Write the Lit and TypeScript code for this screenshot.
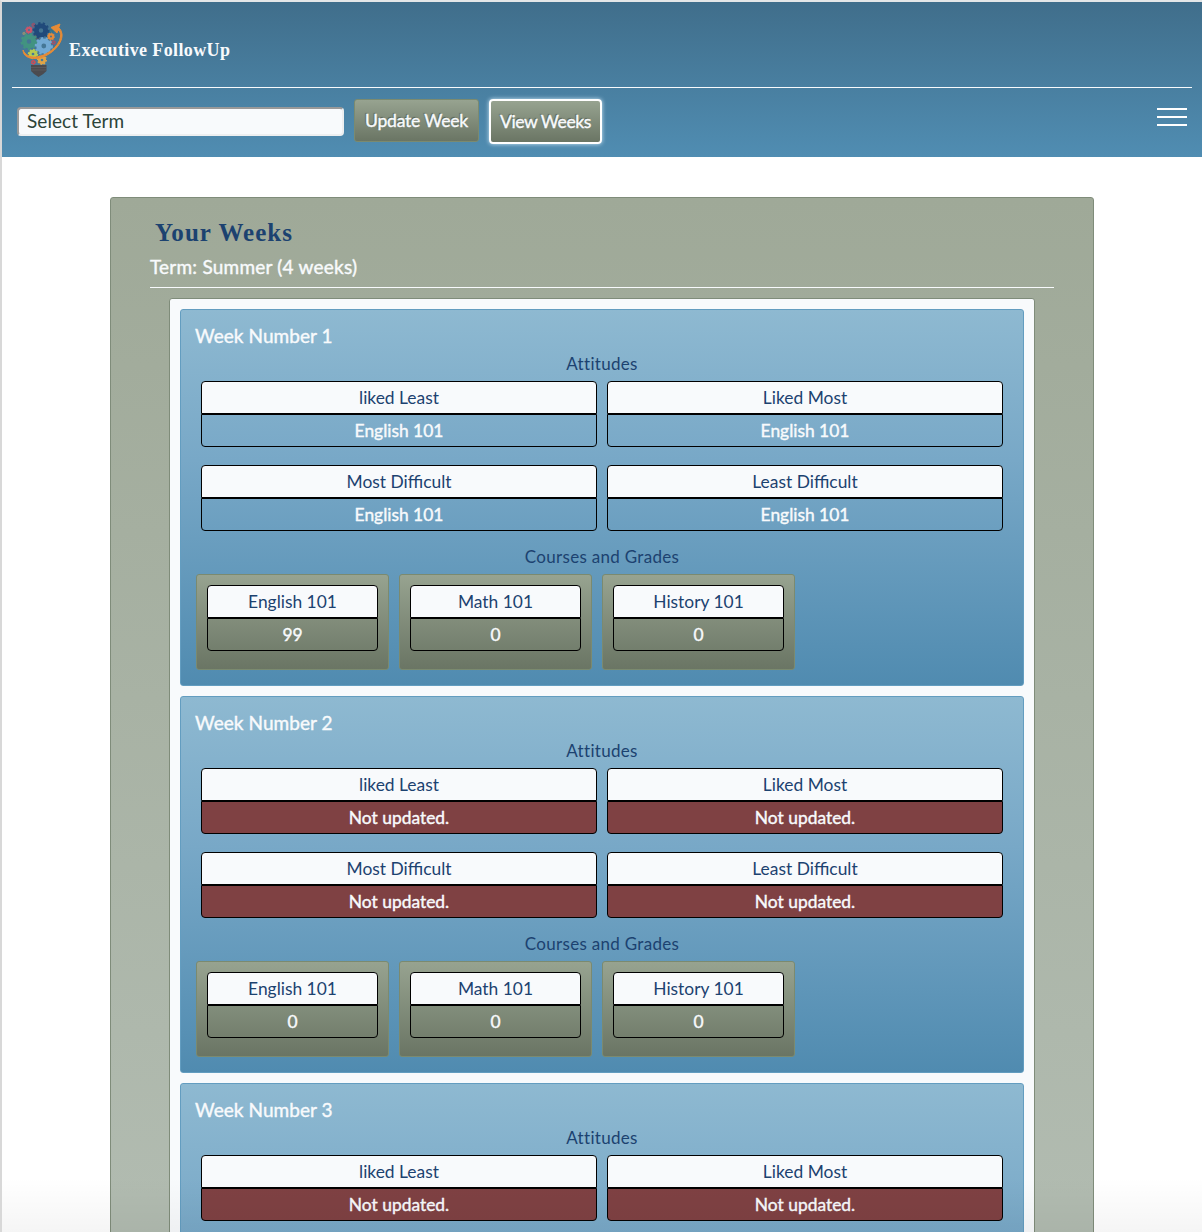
import { LitElement, html, css, svg } from "lit";
import { customElement, property } from "lit/decorators.js";

interface Entry { label: string; value: string; missing?: boolean; }
interface Week { num: number; attitudes: Entry[]; courses: Entry[]; }

const NAMES = ["liked Least", "Liked Most", "Most Difficult", "Least Difficult"];
const COURSES = ["English 101", "Math 101", "History 101"];

const makeWeek = (num: number): Week => ({
  num,
  attitudes: NAMES.map((label) =>
    num === 1 ? { label, value: "English 101" } : { label, value: "Not updated.", missing: true }),
  courses: COURSES.map((label, i) => ({ label, value: num === 1 && i === 0 ? "99" : "0" })),
});

const WEEKS: Week[] = [
  makeWeek(1),
  makeWeek(2),
  { num: 3, attitudes: makeWeek(3).attitudes.slice(0, 2), courses: [] },
];

/** A toothed ring centred on (x, y). */
const gear = (x: number, y: number, r: number, color: string, teeth = 8) => {
  const ring = r * 0.58;
  const dash = (Math.PI * 2 * (r * 0.9)) / (teeth * 2);
  return svg`
    <circle cx=${x} cy=${y} r=${ring} fill="none" stroke=${color} stroke-width=${r * 0.6}></circle>
    <circle cx=${x} cy=${y} r=${r * 0.92} fill="none" stroke=${color} stroke-width=${r * 0.28}
      stroke-dasharray="${dash} ${dash}"></circle>`;
};

@customElement("entry-box")
class EntryBox extends LitElement {
  @property({ attribute: false }) entry!: Entry;

  static styles = css`
    :host { display: block; }
    .cell {
      box-sizing: border-box;
      height: 33px;
      line-height: 31px;
      border: 1px solid #000;
      text-align: center;
      font-size: 17.4px;
      white-space: nowrap;
    }
    .label { background: #f8fafc; color: #1c4270; border-radius: 4px 4px 0 0; }
    .value { color: #f8fafc; border-radius: 0 0 4px 4px; -webkit-text-stroke: 0.4px #f8fafc; }
    .missing { background: #7f4143; }
  `;

  render() {
    return html`
      <div class="cell label">${this.entry.label}</div>
      <div class="cell value ${this.entry.missing ? "missing" : ""}">${this.entry.value}</div>`;
  }
}

@customElement("week-card")
class WeekCard extends LitElement {
  @property({ attribute: false }) week!: Week;

  static styles = css`
    :host {
      display: block;
      box-sizing: border-box;
      height: 377px;
      padding: 13px 15px 14px;
      border: 1px solid #639dc0;
      border-radius: 3px;
      background: linear-gradient(#8eb9d1, #78a8c7 40%, #508bb0);
    }
    .title {
      height: 26px; line-height: 26px; font-size: 19px; color: #f8fafc;
      margin-left: -1px; letter-spacing: 0.06px; -webkit-text-stroke: 0.4px #f8fafc;
    }
    .section { height: 32px; line-height: 30px; font-size: 17px; text-align: center; color: #1c4270; letter-spacing: 0.3px; }
    .attitudes { display: grid; grid-template-columns: 1fr 1fr; gap: 18px 10px; margin: 0 5px; }
    .courses-title { margin-top: 11px; }
    .courses { display: flex; gap: 10px; }
    .course {
      box-sizing: border-box;
      width: 193px;
      height: 96px;
      padding: 10px;
      border: 1px solid #7b8a6f;
      border-radius: 3px;
      background: linear-gradient(#97a390, #6a7564);
    }
  `;

  render() {
    const w = this.week;
    return html`
      <div class="title">Week Number ${w.num}</div>
      <div class="section">Attitudes</div>
      <div class="attitudes">${w.attitudes.map((e) => html`<entry-box .entry=${e}></entry-box>`)}</div>
      ${w.courses.length ? html`
        <div class="section courses-title">Courses and Grades</div>
        <div class="courses">
          ${w.courses.map((e) => html`<div class="course"><entry-box .entry=${e}></entry-box></div>`)}
        </div>` : null}`;
  }
}

@customElement("app-root")
class AppRoot extends LitElement {
  static styles = css`
    :host {
      display: block;
      position: relative;
      box-sizing: border-box;
      width: 1202px;
      height: 1232px;
      overflow: hidden;
      border-left: 2px solid #d8d8d8;
      border-top: 2px solid #e4e6e7;
      background: #fff;
      font-family: Lato, "Liberation Sans", sans-serif;
    }
    .header {
      box-sizing: border-box;
      height: 155px;
      padding: 0 10px;
      background: linear-gradient(#406e8b, #508db2);
    }
    .brand {
      box-sizing: border-box;
      height: 86px;
      padding: 17px 0 0 6px;
      border-bottom: 1px solid #f8fafc;
      display: flex;
    }
    .logo { width: 50px; height: 60px; flex: none; }
    .brand-name {
      margin-left: 1px;
      font: bold 18px/62px "Liberation Serif", serif;
      letter-spacing: 0.38px;
      color: #f8fafc;
    }
    .bar { display: flex; align-items: flex-start; padding: 11px 5px 0; }
    .select {
      box-sizing: border-box;
      width: 327px;
      height: 29px;
      margin: 8px 10px 0 0;
      padding-left: 8px;
      border: 2px solid;
      border-color: #999 #edeff0 #edeff0 #999;
      border-radius: 4px;
      background: #f8fafc;
      color: #2c4439;
      font-size: 19px;
      line-height: 24px;
      letter-spacing: 0.07px;
    }
    .button {
      box-sizing: border-box;
      height: 43px;
      border: 1px solid #7b8a6f;
      border-radius: 3px;
      background: linear-gradient(#97a390, #6a7564);
      color: #f8fafc;
      font-size: 17.5px;
      line-height: 41px;
      text-align: center;
      white-space: nowrap;
      text-shadow: -1px -1px 1px #596252;
      -webkit-text-stroke: 0.4px #f8fafc;
      letter-spacing: -0.2px;
    }
    .update { width: 125px; margin-right: 10px; }
    .view {
      width: 113px; height: 45px; border: 2px solid #fff; border-radius: 4px;
      box-shadow: 0 0 4px #cfe8f8; letter-spacing: -0.4px;
    }
    .menu { margin: 9px 0 0 auto; display: flex; flex-direction: column; gap: 6px; width: 30px; }
    .menu-line { height: 2px; background: #fff; }
    .panel {
      box-sizing: border-box;
      width: 984px;
      height: 1900px;
      margin: 40px 0 0 108px;
      padding: 17px 39px;
      border: 1px solid #7f8c7a;
      border-radius: 3px;
      background: linear-gradient(#9fa998, #b1bbb0 1000px);
    }
    .heading {
      padding-left: 5px;
      font: bold 25px/36px "Liberation Serif", serif;
      letter-spacing: 1.05px;
      color: #1c4270;
    }
    .term {
      box-sizing: border-box;
      height: 37px;
      border-bottom: 1px solid #f8fafc;
      font-size: 19px;
      line-height: 31px;
      letter-spacing: 0.22px;
      color: #f8fafc;
      -webkit-text-stroke: 0.4px #f8fafc;
    }
    .weeks {
      display: flex;
      flex-direction: column;
      gap: 10px;
      height: 1600px;
      margin: 10px 19px 0;
      padding: 10px;
      border: 1px solid #7f8c7a;
      border-radius: 3px;
      background: #f8fafc;
    }
    .fade {
      position: absolute;
      left: 0; right: 0; bottom: 0;
      height: 55px;
      background: linear-gradient(transparent, rgba(0, 0, 0, 0.04));
    }
  `;

  render() {
    return html`
      <div class="header">
        <div class="brand">
          <svg class="logo" viewBox="18 19 50 60">
            ${gear(29, 30, 3.6, "#c8566b")}
            ${gear(33.5, 25, 2.2, "#96526c", 6)}
            ${gear(24, 33.5, 1.6, "#b59a68", 6)}
            ${gear(51, 31.5, 2.6, "#32738a", 6)}
            ${gear(37, 36.5, 3, "#545e68", 6)}
            ${gear(53.5, 42.5, 2.4, "#a45068", 6)}
            ${gear(48, 52.5, 2.6, "#33778d", 6)}
            ${gear(41, 30.5, 8, "#214a7a", 10)}
            ${gear(29, 41.5, 8, "#429381", 9)}
            ${gear(43.8, 46, 8.6, "#72a9d3", 10)}
            ${gear(51, 36.5, 3.7, "#e38a3b")}
            ${gear(42, 60, 4.7, "#dfa447")}
            ${gear(33.3, 62.3, 2.5, "#c94e58", 6)}
            ${gear(33, 54, 4.9, "#b6ca50")}
            <path d="M23 50C23 56 29 59 36 58.5C49 57.5 63 45 62 34Q61.5 30 58.8 27.5L60 24L51 27.5L57 33L58 30C60 31 61 34 60.5 37C59 47 46 56 36 57C30 57.5 25 55 23 50Z"
              fill="#e68b36" stroke="#e68b36" stroke-width="1"></path>
            <path d="M31 65H46.500V71Q44 74 38.500 77Q33.500 74 31 71Z" fill="#4b4b4f"></path>
            <path d="M31 67.500H46.500M31 70H46.500" stroke="#68696b" stroke-width=".5"></path>
          </svg>
          <div class="brand-name">Executive FollowUp</div>
        </div>
        <div class="bar">
          <div class="select">Select Term</div>
          <div class="button update">Update Week</div>
          <div class="button view">View Weeks</div>
          <div class="menu">
            <div class="menu-line"></div><div class="menu-line"></div><div class="menu-line"></div>
          </div>
        </div>
      </div>
      <div class="panel">
        <div class="heading">Your Weeks</div>
        <div class="term">Term: Summer (4 weeks)</div>
        <div class="weeks">${WEEKS.map((w) => html`<week-card .week=${w}></week-card>`)}</div>
      </div>
      <div class="fade"></div>`;
  }
}
